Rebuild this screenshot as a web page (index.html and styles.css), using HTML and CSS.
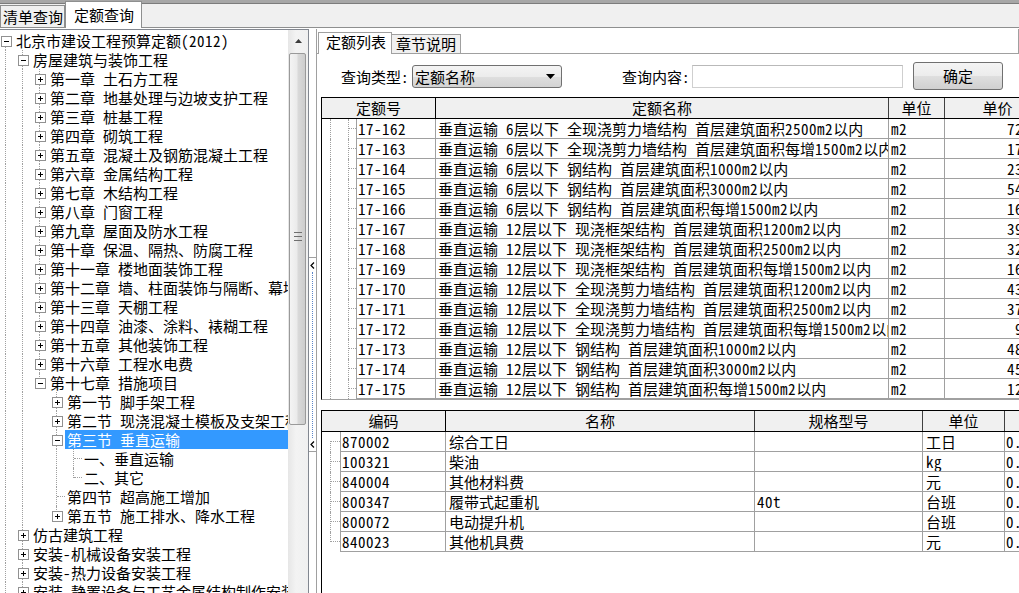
FILE: index.html
```html
<!DOCTYPE html>
<html lang="zh-CN">
<head>
<meta charset="utf-8">
<title>定额查询</title>
<link rel="stylesheet" href="styles.css">
</head>
<body>
<div class="app">
  <div class="topstrip">
    <div class="ltab">清单查询</div>
    <div class="ltab active">定额查询</div>
  </div>
  <div class="main">
    <div class="treepane">
      <div class="tree">
        <div class="tree-in">
          <div class="row"><i class="g bm dn"></i><span class="lbl">北京市建设工程预算定额<span class="n">(2012)</span></span></div>
          <div class="row"><i class="g v"></i><i class="g bm v"></i><span class="lbl">房屋建筑与装饰工程</span></div>
          <div class="row"><i class="g v"></i><i class="g v"></i><i class="g bp v"></i><span class="lbl">第一章<span class="n"> </span>土石方工程</span></div>
          <div class="row"><i class="g v"></i><i class="g v"></i><i class="g bp v"></i><span class="lbl">第二章<span class="n"> </span>地基处理与边坡支护工程</span></div>
          <div class="row"><i class="g v"></i><i class="g v"></i><i class="g bp v"></i><span class="lbl">第三章<span class="n"> </span>桩基工程</span></div>
          <div class="row"><i class="g v"></i><i class="g v"></i><i class="g bp v"></i><span class="lbl">第四章<span class="n"> </span>砌筑工程</span></div>
          <div class="row"><i class="g v"></i><i class="g v"></i><i class="g bp v"></i><span class="lbl">第五章<span class="n"> </span>混凝土及钢筋混凝土工程</span></div>
          <div class="row"><i class="g v"></i><i class="g v"></i><i class="g bp v"></i><span class="lbl">第六章<span class="n"> </span>金属结构工程</span></div>
          <div class="row"><i class="g v"></i><i class="g v"></i><i class="g bp v"></i><span class="lbl">第七章<span class="n"> </span>木结构工程</span></div>
          <div class="row"><i class="g v"></i><i class="g v"></i><i class="g bp v"></i><span class="lbl">第八章<span class="n"> </span>门窗工程</span></div>
          <div class="row"><i class="g v"></i><i class="g v"></i><i class="g bp v"></i><span class="lbl">第九章<span class="n"> </span>屋面及防水工程</span></div>
          <div class="row"><i class="g v"></i><i class="g v"></i><i class="g bp v"></i><span class="lbl">第十章<span class="n"> </span>保温、隔热、防腐工程</span></div>
          <div class="row"><i class="g v"></i><i class="g v"></i><i class="g bp v"></i><span class="lbl">第十一章<span class="n"> </span>楼地面装饰工程</span></div>
          <div class="row"><i class="g v"></i><i class="g v"></i><i class="g bp v"></i><span class="lbl">第十二章<span class="n"> </span>墙、柱面装饰与隔断、幕墙工程</span></div>
          <div class="row"><i class="g v"></i><i class="g v"></i><i class="g bp v"></i><span class="lbl">第十三章<span class="n"> </span>天棚工程</span></div>
          <div class="row"><i class="g v"></i><i class="g v"></i><i class="g bp v"></i><span class="lbl">第十四章<span class="n"> </span>油漆、涂料、裱糊工程</span></div>
          <div class="row"><i class="g v"></i><i class="g v"></i><i class="g bp v"></i><span class="lbl">第十五章<span class="n"> </span>其他装饰工程</span></div>
          <div class="row"><i class="g v"></i><i class="g v"></i><i class="g bp v"></i><span class="lbl">第十六章<span class="n"> </span>工程水电费</span></div>
          <div class="row"><i class="g v"></i><i class="g v"></i><i class="g bm up"></i><span class="lbl">第十七章<span class="n"> </span>措施项目</span></div>
          <div class="row"><i class="g v"></i><i class="g v"></i><i class="g"></i><i class="g bp v"></i><span class="lbl">第一节<span class="n"> </span>脚手架工程</span></div>
          <div class="row"><i class="g v"></i><i class="g v"></i><i class="g"></i><i class="g bp v"></i><span class="lbl">第二节<span class="n"> </span>现浇混凝土模板及支架工程</span></div>
          <div class="row sel"><i class="g v"></i><i class="g v"></i><i class="g"></i><i class="g bm v"></i><span class="lbl">第三节<span class="n"> </span>垂直运输</span></div>
          <div class="row"><i class="g v"></i><i class="g v"></i><i class="g"></i><i class="g v"></i><i class="g t"></i><span class="lbl">一、垂直运输</span></div>
          <div class="row"><i class="g v"></i><i class="g v"></i><i class="g"></i><i class="g v"></i><i class="g c"></i><span class="lbl">二、其它</span></div>
          <div class="row"><i class="g v"></i><i class="g v"></i><i class="g"></i><i class="g t"></i><span class="lbl">第四节<span class="n"> </span>超高施工增加</span></div>
          <div class="row"><i class="g v"></i><i class="g v"></i><i class="g"></i><i class="g bp up"></i><span class="lbl">第五节<span class="n"> </span>施工排水、降水工程</span></div>
          <div class="row"><i class="g v"></i><i class="g bp v"></i><span class="lbl">仿古建筑工程</span></div>
          <div class="row"><i class="g v"></i><i class="g bp v"></i><span class="lbl">安装<span class="n">-</span>机械设备安装工程</span></div>
          <div class="row"><i class="g v"></i><i class="g bp v"></i><span class="lbl">安装<span class="n">-</span>热力设备安装工程</span></div>
          <div class="row"><i class="g v"></i><i class="g bp v"></i><span class="lbl">安装<span class="n">-</span>静置设备与工艺金属结构制作安装工程</span></div>
        </div>
      </div>
      <div class="vscroll">
        <div class="sbtn"><svg width="7" height="4" viewBox="0 0 7 4"><polygon points="0,4 3.5,0 7,4" fill="#3c3c3c"/></svg></div>
        <div class="thumb"><div class="grip"><i></i><i></i><i></i></div></div>
        <div class="track"></div>
      </div>
    </div>
    <div class="splitter">
      <div class="splitbtn">
        <svg width="5" height="7" viewBox="0 0 5 7"><polyline points="4,0.5 1,3.5 4,6.5" fill="none" stroke="#000" stroke-width="1.2"/></svg>
        <div class="sdots"></div>
        <svg width="5" height="7" viewBox="0 0 5 7"><polyline points="4,0.5 1,3.5 4,6.5" fill="none" stroke="#000" stroke-width="1.2"/></svg>
      </div>
    </div>
    <div class="rpanel">
      <div class="rtabs">
        <div class="rtab active">定额列表</div>
        <div class="rtab">章节说明</div>
      </div>
      <div class="query">
        <span class="qlbl">查询类型<span class="n">:</span></span>
        <div class="combo"><span class="ctext">定额名称</span><svg class="carrow" width="9" height="5" viewBox="0 0 9 5"><polygon points="0,0 9,0 4.5,5" fill="#000"/></svg></div>
        <span class="qlbl q2">查询内容<span class="n">:</span></span>
        <div class="qinput"></div>
        <div class="btn">确定</div>
      </div>

      <div class="grid g1">
        <div class="ghead">
          <div class="hc hfirst" style="width:114px">定额号</div>
          <div class="hc" style="width:453px">定额名称</div>
          <div class="hc" style="width:56px">单位</div>
          <div class="hc" style="width:106px">单价</div>
        </div>
        <div class="grow"><i class="tg a"></i><i class="tg b"></i><div class="dc code1">17-162</div><div class="dc name1">垂直运输<span class="n"> 6</span>层以下<span class="n"> </span>全现浇剪力墙结构<span class="n"> </span>首层建筑面积<span class="n">2500m2</span>以内</div><div class="dc unit1">m2</div><div class="dc price">72.47</div></div>
        <div class="grow"><i class="tg a"></i><i class="tg b"></i><div class="dc code1">17-163</div><div class="dc name1">垂直运输<span class="n"> 6</span>层以下<span class="n"> </span>全现浇剪力墙结构<span class="n"> </span>首层建筑面积每增<span class="n">1500m2</span>以内</div><div class="dc unit1">m2</div><div class="dc price">17.26</div></div>
        <div class="grow"><i class="tg a"></i><i class="tg b"></i><div class="dc code1">17-164</div><div class="dc name1">垂直运输<span class="n"> 6</span>层以下<span class="n"> </span>钢结构<span class="n"> </span>首层建筑面积<span class="n">1000m2</span>以内</div><div class="dc unit1">m2</div><div class="dc price">23.90</div></div>
        <div class="grow"><i class="tg a"></i><i class="tg b"></i><div class="dc code1">17-165</div><div class="dc name1">垂直运输<span class="n"> 6</span>层以下<span class="n"> </span>钢结构<span class="n"> </span>首层建筑面积<span class="n">3000m2</span>以内</div><div class="dc unit1">m2</div><div class="dc price">54.13</div></div>
        <div class="grow"><i class="tg a"></i><i class="tg b"></i><div class="dc code1">17-166</div><div class="dc name1">垂直运输<span class="n"> 6</span>层以下<span class="n"> </span>钢结构<span class="n"> </span>首层建筑面积每增<span class="n">1500m2</span>以内</div><div class="dc unit1">m2</div><div class="dc price">16.55</div></div>
        <div class="grow"><i class="tg a"></i><i class="tg b"></i><div class="dc code1">17-167</div><div class="dc name1">垂直运输<span class="n"> 12</span>层以下<span class="n"> </span>现浇框架结构<span class="n"> </span>首层建筑面积<span class="n">1200m2</span>以内</div><div class="dc unit1">m2</div><div class="dc price">39.81</div></div>
        <div class="grow"><i class="tg a"></i><i class="tg b"></i><div class="dc code1">17-168</div><div class="dc name1">垂直运输<span class="n"> 12</span>层以下<span class="n"> </span>现浇框架结构<span class="n"> </span>首层建筑面积<span class="n">2500m2</span>以内</div><div class="dc unit1">m2</div><div class="dc price">32.66</div></div>
        <div class="grow"><i class="tg a"></i><i class="tg b"></i><div class="dc code1">17-169</div><div class="dc name1">垂直运输<span class="n"> 12</span>层以下<span class="n"> </span>现浇框架结构<span class="n"> </span>首层建筑面积每增<span class="n">1500m2</span>以内</div><div class="dc unit1">m2</div><div class="dc price">16.07</div></div>
        <div class="grow"><i class="tg a"></i><i class="tg b"></i><div class="dc code1">17-170</div><div class="dc name1">垂直运输<span class="n"> 12</span>层以下<span class="n"> </span>全现浇剪力墙结构<span class="n"> </span>首层建筑面积<span class="n">1200m2</span>以内</div><div class="dc unit1">m2</div><div class="dc price">43.52</div></div>
        <div class="grow"><i class="tg a"></i><i class="tg b"></i><div class="dc code1">17-171</div><div class="dc name1">垂直运输<span class="n"> 12</span>层以下<span class="n"> </span>全现浇剪力墙结构<span class="n"> </span>首层建筑面积<span class="n">2500m2</span>以内</div><div class="dc unit1">m2</div><div class="dc price">37.74</div></div>
        <div class="grow"><i class="tg a"></i><i class="tg b"></i><div class="dc code1">17-172</div><div class="dc name1">垂直运输<span class="n"> 12</span>层以下<span class="n"> </span>全现浇剪力墙结构<span class="n"> </span>首层建筑面积每增<span class="n">1500m2</span>以内</div><div class="dc unit1">m2</div><div class="dc price">9.38</div></div>
        <div class="grow"><i class="tg a"></i><i class="tg b"></i><div class="dc code1">17-173</div><div class="dc name1">垂直运输<span class="n"> 12</span>层以下<span class="n"> </span>钢结构<span class="n"> </span>首层建筑面积<span class="n">1000m2</span>以内</div><div class="dc unit1">m2</div><div class="dc price">48.91</div></div>
        <div class="grow"><i class="tg a"></i><i class="tg b"></i><div class="dc code1">17-174</div><div class="dc name1">垂直运输<span class="n"> 12</span>层以下<span class="n"> </span>钢结构<span class="n"> </span>首层建筑面积<span class="n">3000m2</span>以内</div><div class="dc unit1">m2</div><div class="dc price">45.30</div></div>
        <div class="grow"><i class="tg a"></i><i class="tg b"></i><div class="dc code1">17-175</div><div class="dc name1">垂直运输<span class="n"> 12</span>层以下<span class="n"> </span>钢结构<span class="n"> </span>首层建筑面积每增<span class="n">1500m2</span>以内</div><div class="dc unit1">m2</div><div class="dc price">12.84</div></div>
      </div>

      <div class="grid g2">
        <div class="ghead">
          <div class="hc hfirst" style="width:124px">编码</div>
          <div class="hc" style="width:309px">名称</div>
          <div class="hc" style="width:168px">规格型号</div>
          <div class="hc" style="width:82px">单位</div>
          <div class="hc" style="width:96px">消耗量</div>
        </div>
        <div class="grow"><i class="tg s first"></i><div class="dc code2">870002</div><div class="dc name2">综合工日</div><div class="dc spec2"></div><div class="dc unit2">工日</div><div class="dc qty">0.2800</div></div>
        <div class="grow"><i class="tg s"></i><div class="dc code2">100321</div><div class="dc name2">柴油</div><div class="dc spec2"></div><div class="dc unit2 n">kg</div><div class="dc qty">0.5100</div></div>
        <div class="grow"><i class="tg s"></i><div class="dc code2">840004</div><div class="dc name2">其他材料费</div><div class="dc spec2"></div><div class="dc unit2">元</div><div class="dc qty">0.3200</div></div>
        <div class="grow"><i class="tg s"></i><div class="dc code2">800347</div><div class="dc name2">履带式起重机</div><div class="dc spec2 n">40t</div><div class="dc unit2">台班</div><div class="dc qty">0.0060</div></div>
        <div class="grow"><i class="tg s"></i><div class="dc code2">800072</div><div class="dc name2">电动提升机</div><div class="dc spec2"></div><div class="dc unit2">台班</div><div class="dc qty">0.0140</div></div>
        <div class="grow"><i class="tg s last"></i><div class="dc code2">840023</div><div class="dc name2">其他机具费</div><div class="dc spec2"></div><div class="dc unit2">元</div><div class="dc qty">0.2100</div></div>
      </div>
    </div>
  </div>
</div>
</body>
</html>
```

FILE: styles.css
```css
* { box-sizing: border-box; }

html, body {
  margin: 0;
  padding: 0;
}

body {
  width: 1019px;
  height: 593px;
  overflow: hidden;
  background: #fff;
  color: #000;
  font-family: "Noto Sans Mono CJK SC", "Noto Sans CJK SC", sans-serif;
  font-size: 15px;
  line-height: 19px;
}

/* half-width (ASCII) runs: 8px advance like the bitmap UI font */
.n { letter-spacing: 0.5px; }

.app {
  display: flex;
  flex-direction: column;
  height: 593px;
}

/* ---------- top tab strip ---------- */
.topstrip {
  flex: none;
  height: 28px;
  display: flex;
  align-items: flex-end;
  border-bottom: 1px solid #8e8f8f;
  background: linear-gradient(#a7a7a7 0, #a7a7a7 3px, #7c7c7c 3px, #7c7c7c 4px, #f0f0f0 4px);
}

.ltab {
  height: 22px;
  padding: 0 1px 0 2px;
  line-height: 21px;
  background: #f0f0f0;
  border: 1px solid #8e8f8f;
  border-bottom: none;
}

.ltab.active {
  height: 27px;
  margin-bottom: -1px;
  padding: 2px 7px 0 8px;
  background: #fff;
  position: relative;
  z-index: 1;
}

/* ---------- main area ---------- */
.main {
  flex: 1;
  min-height: 0;
  display: flex;
  padding-top: 1px;
  background: #fff;
}

.treepane {
  flex: none;
  width: 309px;
  display: flex;
  border-top: 1px solid #828790;
  border-right: 1px solid #828790;
}

.tree {
  width: 288px;
  overflow: hidden;
  padding-top: 1px;
}

.tree-in {
  margin-left: -3px;
}

.row {
  display: flex;
  height: 19px;
  white-space: nowrap;
}

.g {
  flex: none;
  width: 17px;
  height: 19px;
  position: relative;
}

.g.v::before,
.g.t::before {
  content: "";
  position: absolute;
  left: 8px;
  top: 0;
  bottom: 0;
  border-left: 1px dotted #a0a0a0;
}

.g.c::before,
.g.up::before {
  content: "";
  position: absolute;
  left: 8px;
  top: 0;
  height: 10px;
  border-left: 1px dotted #a0a0a0;
}

.g.dn::before {
  content: "";
  position: absolute;
  left: 8px;
  top: 9px;
  bottom: 0;
  border-left: 1px dotted #a0a0a0;
}

.g.t::after,
.g.c::after {
  content: "";
  position: absolute;
  left: 9px;
  top: 9px;
  width: 8px;
  border-top: 1px dotted #a0a0a0;
}

.g.bp::after,
.g.bm::after {
  content: "";
  position: absolute;
  left: 4px;
  top: 5px;
  width: 9px;
  height: 9px;
  border: 1px solid #919191;
}

.g.bm::after {
  background: linear-gradient(#000, #000) center / 5px 1px no-repeat, #fff;
}

.g.bp::after {
  background:
    linear-gradient(#000, #000) center / 5px 1px no-repeat,
    linear-gradient(#000, #000) center / 1px 5px no-repeat,
    #fff;
}

.lbl {
  flex: 1 0 auto;
  padding: 0 2px;
  line-height: 19px;
}

.row.sel .lbl {
  background: #3399ff;
  color: #fff;
}

/* vertical scrollbar */
.vscroll {
  flex: none;
  width: 20px;
  display: flex;
  flex-direction: column;
  background: linear-gradient(to right, #e6e6e6, #f3f3f3 40%, #f0f0f0);
}

.sbtn {
  height: 23px;
  display: flex;
  align-items: center;
  justify-content: center;
  padding-bottom: 1px;
}

.thumb {
  height: 372px;
  margin: 0 2px 0 1px;
  border: 1px solid #9a9a9a;
  border-radius: 2px;
  background: linear-gradient(to right, #f4f4f4, #ebebeb 45%, #d9d9d9 55%, #cdcdcd);
  display: flex;
  align-items: center;
  justify-content: center;
}

.grip {
  display: flex;
  flex-direction: column;
  gap: 3px;
  margin-top: -6px;
}

.grip i {
  display: block;
  width: 8px;
  height: 1px;
  background: #6f6f6f;
}

.track {
  flex: 1;
}

/* splitter */
.splitter {
  flex: none;
  width: 8px;
  border-right: 1px solid #a0a0a0;
  display: flex;
  flex-direction: column;
  align-items: center;
}

.splitbtn {
  margin-top: 228px;
  width: 7px;
  height: 195px;
  border-top: 1px solid #a0a0a0;
  border-bottom: 1px solid #a0a0a0;
  display: flex;
  flex-direction: column;
  align-items: center;
  padding: 4px 0 3px;
  gap: 3px;
}

.sdots {
  flex: 1;
  border-left: 1px dotted #5b86c9;
}

/* ---------- right panel ---------- */
.rpanel {
  flex: 1;
  min-width: 0;
  overflow: hidden;
  display: flex;
  flex-direction: column;
}

.rtabs {
  flex: none;
  display: flex;
  align-items: flex-end;
  height: 25px;
  padding-top: 3px;
  border-bottom: 1px solid #a0a0a0;
  padding-left: 1px;
  border-right: 1px solid #a0a0a0;
}

.rtab {
  height: 19px;
  padding: 0 4px;
  line-height: 18px;
  background: #f0f0f0;
  border: 1px solid #a0a0a0;
  border-left: none;
  border-bottom: none;
}

.rtab.active {
  height: 22px;
  margin-bottom: -1px;
  padding: 0 5px 4px 7px;
  line-height: 17px;
  background: #fff;
  border-left: 1px solid #a0a0a0;
  position: relative;
  z-index: 1;
}

.query {
  flex: none;
  display: flex;
  align-items: center;
  height: 28px;
  margin-top: 8px;
  padding-left: 24px;
  white-space: nowrap;
}

.combo {
  margin-left: 3px;
  width: 150px;
  height: 23px;
  border: 1px solid #707070;
  border-radius: 3px;
  background: linear-gradient(#f4f4f4, #ececec 50%, #dfdfdf 50%, #d3d3d3);
  display: flex;
  align-items: center;
  justify-content: space-between;
  padding: 0 6px 0 2px;
}

.q2 {
  margin-left: 60px;
}

.qinput {
  margin-left: 2px;
  width: 211px;
  height: 23px;
  border: 1px solid #cfcfcf;
  border-top-color: #b9b9b9;
  background: #fff;
}

.btn {
  margin-left: 10px;
  width: 90px;
  height: 28px;
  border: 1px solid #707070;
  border-radius: 3px;
  background: linear-gradient(#f4f4f4, #ececec 50%, #dfdfdf 50%, #d0d0d0);
  text-align: center;
  line-height: 25px;
}

/* ---------- grids ---------- */
.grid {
  flex: none;
  width: 900px;
  margin-left: 4px;
  border-left: 1px solid #000;
  border-top: 1px solid #000;
}

.g1 {
  margin-top: 7px;
  border-bottom: 1px solid #a0a0a0;
}

.g2 {
  flex: 1;
  margin-top: 10px;
}

.ghead {
  display: flex;
  height: 21px;
  border-bottom: 1px solid #000;
  background: #f0f0f0;
}

.hc {
  flex: none;
  height: 20px;
  line-height: 20px;
  text-align: center;
  border-right: 1px solid #404040;
  white-space: nowrap;
  overflow: hidden;
}

.hc.hfirst {
  border-right-color: #000;
}

.grow {
  display: flex;
  height: 20px;
}

.tg {
  flex: none;
  height: 20px;
  position: relative;
}

.tg.a { width: 17px; }
.tg.b { width: 17px; }
.tg.s { width: 18px; }

.tg.a::before,
.tg.b::before,
.tg.s::before {
  content: "";
  position: absolute;
  top: 0;
  bottom: 0;
  left: 8px;
  border-left: 1px dotted #a0a0a0;
}

.tg.b::before { left: 9px; }

.tg.s.first::before { top: 9px; }
.tg.s.last::before { bottom: auto; height: 10px; }

.tg.b::after,
.tg.s::after {
  content: "";
  position: absolute;
  top: 9px;
  right: 0;
  border-top: 1px dotted #a0a0a0;
}

.tg.b::after { left: 10px; }
.tg.s::after { left: 9px; }

.dc {
  flex: none;
  height: 20px;
  line-height: 19px;
  padding-left: 2px;
  border-right: 1px solid #a0a0a0;
  border-bottom: 1px solid #a0a0a0;
  white-space: nowrap;
  overflow: hidden;
}

.code1 { width: 80px; border-left: 1px solid #a0a0a0; padding-left: 1px; letter-spacing: 0.5px; }
.name1 { width: 453px; }
.unit1 { width: 56px; letter-spacing: 0.5px; }
.price { width: 106px; text-align: right; padding-right: 3px; letter-spacing: 0.5px; }

.code2 { width: 106px; border-left: 1px solid #a0a0a0; padding-left: 1px; letter-spacing: 0.5px; }
.name2 { width: 309px; padding-left: 3px; }
.spec2 { width: 168px; }
.unit2 { width: 82px; padding-left: 3px; }
.qty { width: 96px; padding-left: 1px; letter-spacing: 0.5px; }
```
